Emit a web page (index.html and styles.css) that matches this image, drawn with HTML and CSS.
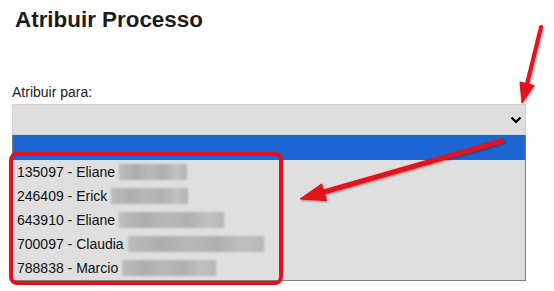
FILE: index.html
```html
<!DOCTYPE html>
<html lang="pt">
<head>
<meta charset="utf-8">
<title>Atribuir Processo</title>
<link rel="stylesheet" href="styles.css">
</head>
<body>
<main class="page">
  <h1 class="title">Atribuir Processo</h1>
  <div class="field">
    <label class="label">Atribuir para:</label>
    <div class="select">
      <span class="value"></span>
      <svg class="chevron" width="12" height="8" viewBox="0 0 12 8"><polyline points="1.5,1.5 6,6 10.5,1.5" fill="none" stroke="#000" stroke-width="2.2"/></svg>
    </div>
    <ul class="listbox">
      <li class="option selected"></li>
      <li class="option">135097 - Eliane <span class="blur" style="width:68px"></span></li>
      <li class="option">246409 - Erick <span class="blur" style="width:77px"></span></li>
      <li class="option">643910 - Eliane <span class="blur" style="width:105px"></span></li>
      <li class="option">700097 - Claudia <span class="blur" style="width:136px"></span></li>
      <li class="option">788838 - Marcio <span class="blur" style="width:94px"></span></li>
    </ul>
  </div>
  <svg class="annotations" width="554" height="291" viewBox="0 0 554 291">
    <defs>
      <filter id="sh" x="-10%" y="-10%" width="120%" height="120%">
        <feDropShadow dx="1" dy="1" stdDeviation="0.8" flood-color="#400" flood-opacity="0.45"/>
      </filter>
    </defs>
    <rect x="11" y="154" width="270" height="129" rx="6" ry="6" fill="none" stroke="#e1121c" stroke-width="4"/>
    <g filter="url(#sh)" fill="#e1121c" stroke="#e1121c">
      <line x1="541" y1="27" x2="527" y2="84" stroke-width="4" stroke-linecap="round"/>
      <polygon points="522,103 534,85.5 520,82" stroke-width="1" stroke-linejoin="round"/>
      <line x1="502" y1="141" x2="322" y2="192.5" stroke-width="5" stroke-linecap="round"/>
      <polygon points="300,199 326.5,200.5 321.5,184" stroke-width="1" stroke-linejoin="round"/>
    </g>
  </svg>
</main>
</body>
</html>
```
FILE: styles.css
```css
html, body {
  margin: 0;
  padding: 0;
  background: #ffffff;
}

.page {
  position: relative;
  width: 554px;
  height: 291px;
  box-sizing: border-box;
  padding: 7px 28px 0 12px;
  font-family: "Liberation Sans", Arial, sans-serif;
  color: #1a1a1a;
  overflow: hidden;
}

.title {
  margin: 0;
  padding-left: 3px;
  font-size: 22.4px;
  line-height: 26px;
  font-weight: bold;
  color: #1b1b1b;
}

.field {
  margin-top: 51px;
  display: flex;
  flex-direction: column;
}

.label {
  font-size: 14px;
  line-height: 16px;
  color: #222;
}

.select {
  margin-top: 4px;
  height: 31px;
  box-sizing: border-box;
  background: #dedede;
  border: 1px solid #d2d2d2;
  display: flex;
  align-items: center;
  justify-content: space-between;
  padding: 0 3px 0 4px;
}

.chevron {
  display: block;
  margin-top: 1px;
}

.listbox {
  list-style: none;
  margin: 0;
  padding: 0;
  background: #dfdfdf;
  border: 1px solid #7d7d7d;
  border-top: none;
}

.option {
  height: 24px;
  line-height: 24px;
  font-size: 14px;
  padding-left: 4px;
  color: #111;
  white-space: nowrap;
}

.option.selected {
  height: 25px;
  background: #1c65d2;
}

.blur {
  display: inline-block;
  height: 16px;
  vertical-align: -3px;
  background: linear-gradient(90deg, #bcbcbc 0%, #adadad 25%, #b9b9b9 45%, #afafaf 65%, #c0c0c0 85%, #b5b5b5 100%);
  filter: blur(1px);
}

.annotations {
  position: absolute;
  left: 0;
  top: 0;
  pointer-events: none;
}
```
